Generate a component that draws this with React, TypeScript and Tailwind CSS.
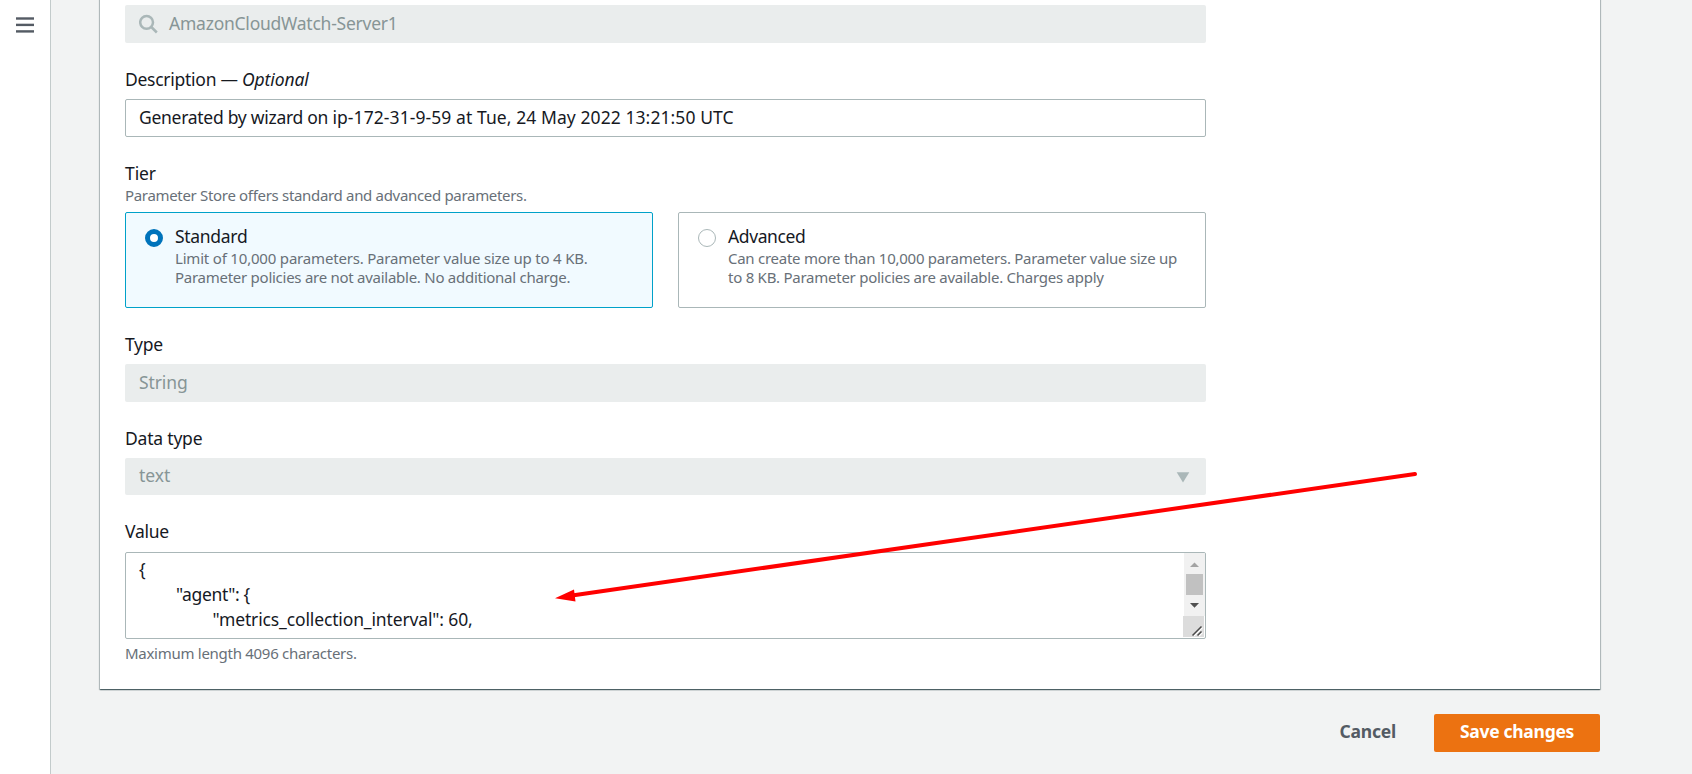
import type { ReactNode } from "react";

function Label({ children, className = "" }: { children: ReactNode; className?: string }) {
  return <div className={`h-[25px] whitespace-pre text-[#16191f] ${className}`}>{children}</div>;
}

function DisabledField({ children, className = "h-[38px] pt-[6px]" }: { children: ReactNode; className?: string }) {
  return (
    <div className={`flex items-start rounded-[2px] bg-[#eaeded] pr-4 pl-[14px] text-[#879596] ${className}`}>
      {children}
    </div>
  );
}

function TierCard({ title, titleClass, selected, children }: {
  title: string;
  titleClass: string;
  selected?: boolean;
  children: ReactNode;
}) {
  return (
    <div
      className={`flex h-24 w-[528px] rounded-[2px] border pt-[11px] pl-[19px] ${
        selected ? "border-[#00a1c9] bg-[#f1faff]" : "border-[#aab7b8] bg-white"
      }`}
    >
      <span
        className={`mt-[5px] h-[18px] w-[18px] shrink-0 rounded-full bg-white ${
          selected ? "border-[5px] border-[#0073bb]" : "border border-[#aab7b8]"
        }`}
      />
      <div className="pl-3">
        <div className={`h-[25px] text-[#16191f] ${titleClass}`}>{title}</div>
        <div className="text-[15px] leading-[19px] whitespace-nowrap text-[#687078]">{children}</div>
      </div>
    </div>
  );
}

export default function App() {
  return (
    <div className="relative flex h-[774px] w-[1692px] overflow-hidden bg-[#f2f3f3] font-['Noto_Sans','Open_Sans',sans-serif] text-[17.5px] leading-[25px]">
      <nav className="w-[51px] shrink-0 border-r border-[#c3cbcb] bg-white pt-[15px] pl-4">
        <svg width="18" height="20" viewBox="0 0 18 20" fill="#545b64">
          <rect y="2.3" width="18" height="2.4" />
          <rect y="8.7" width="18" height="2.4" />
          <rect y="15.2" width="18" height="2.4" />
        </svg>
      </nav>

      <main className="w-[1549px] pl-[49px]">
        <section className="-mt-[5px] h-[694px] bg-white pt-[10px] pl-[25px] shadow-[0_1px_1px_0_rgba(0,28,36,0.5),1px_1px_1px_0_rgba(0,28,36,0.2),-1px_1px_1px_0_rgba(0,28,36,0.2)]">
          <div className="w-[1081px]">
            <DisabledField>
              <svg className="mt-[3px] mr-[10px]" width="20" height="20" viewBox="0 0 20 20" fill="none" stroke="#aab7b8" strokeWidth="2.5">
                <circle cx="7.6" cy="8.3" r="6.4" />
                <path d="M12.3 13L17.8 18.5" />
              </svg>
              <span className="tracking-[-0.24px]">AmazonCloudWatch-Server1</span>
            </DisabledField>

            <Label className="mt-6 tracking-[-0.27px]">
              Description — <em className="italic tracking-[-0.1px]">Optional</em>
            </Label>
            <div className="mt-[7px] h-[38px] rounded-[2px] border border-[#aab7b8] bg-white pt-[5px] pl-[13px] text-[#16191f]">
              <span className="tracking-[-0.28px]">Generated by wizard on </span>
              <span className="tracking-[0.08px]">ip-172-31-9-59 at Tue, 24 May 2022 13:21:50 UTC</span>
            </div>

            <Label className="mt-6 tracking-[-0.1px]">Tier</Label>
            <div className="h-[19px] text-[15px] leading-[19px] tracking-[-0.32px] text-[#687078]">
              Parameter Store offers standard and advanced parameters.
            </div>
            <div className="mt-[7px] flex justify-between">
              <TierCard title="Standard" titleClass="tracking-[-0.3px]" selected>
                <div className="tracking-[-0.19px]">Limit of 10,000 parameters. Parameter value size up to 4 KB.</div>
                <div className="tracking-[-0.265px]">Parameter policies are not available. No additional charge.</div>
              </TierCard>
              <TierCard title="Advanced" titleClass="tracking-[-0.4px]">
                <div className="tracking-[-0.265px]">Can create more than 10,000 parameters. Parameter value size up</div>
                <div className="tracking-[-0.25px]">to 8 KB. Parameter policies are available. Charges apply</div>
              </TierCard>
            </div>

            <Label className="mt-6 tracking-[-0.3px]">Type</Label>
            <DisabledField className="mt-[7px] h-[38px] pt-[6px]">
              <span className="tracking-[-0.1px]">String</span>
            </DisabledField>

            <Label className="mt-6 tracking-[-0.2px]">Data type</Label>
            <DisabledField className="mt-[7px] h-[37px] justify-between pt-[5px]">
              <span>text</span>
              <svg className="mt-[9px]" width="14" height="11" viewBox="0 0 14 11" fill="#aab7b8">
                <path d="M0.7 0.2H13.3L7 10.5Z" />
              </svg>
            </DisabledField>

            <Label className="mt-6 tracking-[-0.25px]">Value</Label>
            <div className="mt-2 flex h-[87px] justify-between overflow-hidden rounded-[2px] border border-[#aab7b8] bg-white text-[#16191f]">
              <div className="pt-[4px] pl-[13px] whitespace-nowrap">
                <div>{"{"}</div>
                <div className="pl-[37px] tracking-[-0.35px]">{'"agent": {'}</div>
                <div className="pl-[73.5px] tracking-[-0.14px]">{'"metrics_collection_interval": 60,'}</div>
              </div>
              <svg width="22" height="85" viewBox="0 0 22 85">
                <rect x="1" width="21" height="63" fill="#f1f1f1" />
                <path d="M7 14H16L11.5 9.5Z" fill="#a3a3a3" />
                <rect x="3" y="21" width="17" height="21" fill="#c1c1c1" />
                <path d="M7 50H16L11.5 54.8Z" fill="#505050" />
                <rect y="63" width="21" height="21" fill="#dcdcdc" />
                <path d="M11 83L19.5 74.5M16 83L19.5 79.5" stroke="#ffffff" strokeWidth="1.2" />
                <path d="M9.5 82.5L18.5 73.5M14.5 82.5L18.5 78.5" stroke="#4a4a4a" strokeWidth="1.5" />
              </svg>
            </div>
            <div className="mt-[5px] text-[15px] leading-[19px] tracking-[-0.28px] text-[#687078]">
              Maximum length 4096 characters.
            </div>
          </div>
        </section>

        <footer className="mt-[25px] flex items-start justify-end font-bold">
          <button className="mr-[38px] h-[38px] pb-[3px] tracking-[-0.2px] text-[#545b64]">Cancel</button>
          <button className="h-[38px] w-[166px] rounded-[2px] bg-[#ec7211] pb-[3px] tracking-[-0.3px] text-white">
            Save changes
          </button>
        </footer>
      </main>

      <svg className="pointer-events-none absolute inset-0" width="1692" height="774" viewBox="0 0 1692 774">
        <path d="M572 595.5L1415 474" stroke="#ff0000" strokeWidth="4" strokeLinecap="round" />
        <path d="M555 598.3L574 589.6L575.5 601.5Z" fill="#ff0000" />
      </svg>
    </div>
  );
}
